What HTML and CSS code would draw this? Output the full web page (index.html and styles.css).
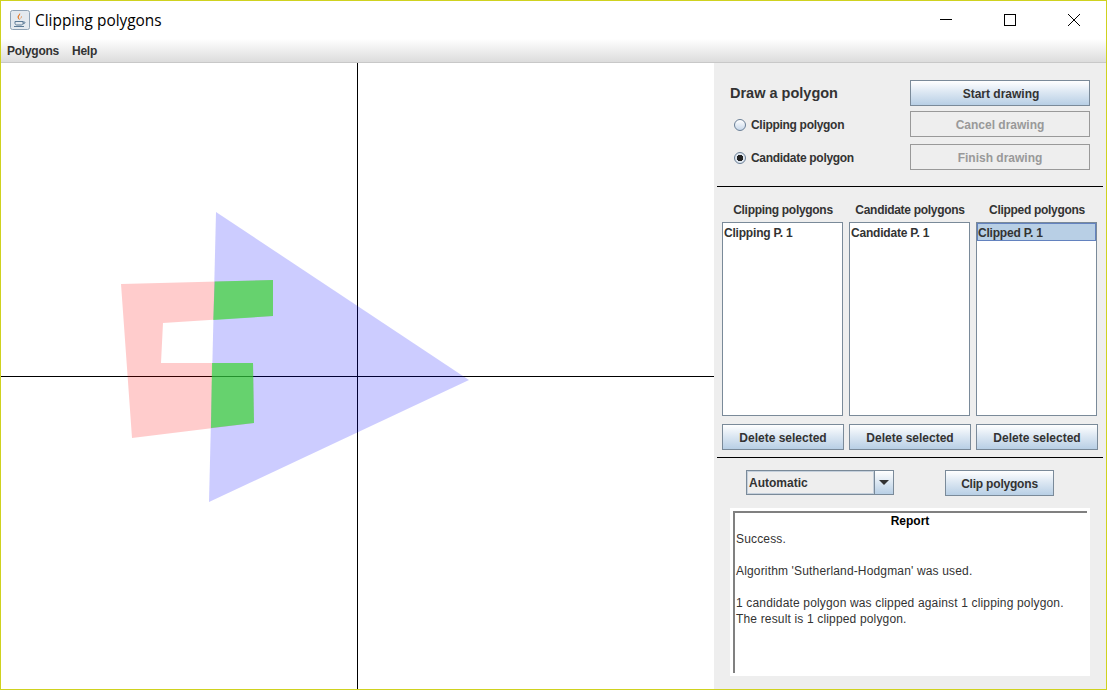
FILE: index.html
```html
<!DOCTYPE html>
<html lang="en">
<head>
    <meta charset="UTF-8">
    <title>Clipping polygons</title>
    <link rel="stylesheet" href="styles.css">
</head>
<body>
    <div class="window">
        <div class="titlebar">
            <svg class="app-icon" width="20" height="20" viewBox="0 0 20 20">
                <rect x="0.5" y="0.5" width="19" height="19" rx="2" fill="#e4e9ef" stroke="#8fa2b5"/>
                <path d="M10 3c1 2-2 3-1 5 .5 1 1 1.5 1 2-1-.5-2.500-1.500-2.500-3S9.500 4.500 10 3zM12 6c0 1.500-1.500 2-1 3.500-1-1 0-3 1-3.500z" fill="#e2792a"/>
                <path d="M5 11.500h8v2c0 1-1 1.500-2 1.500H7c-1 0-2-.5-2-1.500zM13 12h1.500c.8 0 .8 1.800-1.500 1.800" fill="none" stroke="#5b7a96"/>
                <path d="M4 16.500h10" stroke="#5b7a96"/>
            </svg>
            <span class="title">Clipping polygons</span>
            <div class="win-buttons">
                <svg width="12" height="12" viewBox="0 0 12 12"><path d="M0 5.500h12" stroke="#000"/></svg>
                <svg width="12" height="12" viewBox="0 0 12 12"><rect x="0.500" y="0.500" width="11" height="11" fill="none" stroke="#000"/></svg>
                <svg width="12" height="12" viewBox="0 0 12 12"><path d="M0 0l12 12M12 0L0 12" stroke="#000"/></svg>
            </div>
        </div>
        <div class="menubar">
            <span>Polygons</span>
            <span>Help</span>
        </div>
        <div class="main">
            <div class="canvas">
                <svg class="drawing" width="713" height="626" viewBox="1 63 713 626">
                    <path d="M357.500 63V689M1 376.500H714" stroke="#000" fill="none"/>
                    <polygon class="clip-poly" points="121,284 273,280 273,316 163,323 161,363 253,363 254,423 132,438"/>
                    <polygon class="cand-poly" points="216,212 469,380 209,502"/>
                    <polygon class="result-poly" points="214.700,281.500 273,280 273,316 213.300,320"/>
                    <polygon class="result-poly" points="212,363 253,363 254,423 211,428"/>
                </svg>
            </div>
            <div class="side">
                <div class="draw-section">
                    <div class="draw-labels">
                        <h2>Draw a polygon</h2>
                        <label class="radio"><span class="radio-dot"></span>Clipping polygon</label>
                        <label class="radio"><span class="radio-dot checked"></span>Candidate polygon</label>
                    </div>
                    <div class="draw-buttons">
                        <button class="btn start">Start drawing</button>
                        <button class="btn off">Cancel drawing</button>
                        <button class="btn off">Finish drawing</button>
                    </div>
                </div>
                <div class="divider"></div>
                <div class="lists">
                    <div class="list-col">
                        <div class="list-title">Clipping polygons</div>
                        <div class="listbox"><div class="item">Clipping P. 1</div></div>
                        <button class="btn">Delete selected</button>
                    </div>
                    <div class="list-col">
                        <div class="list-title">Candidate polygons</div>
                        <div class="listbox"><div class="item">Candidate P. 1</div></div>
                        <button class="btn">Delete selected</button>
                    </div>
                    <div class="list-col">
                        <div class="list-title">Clipped polygons</div>
                        <div class="listbox"><div class="item selected">Clipped P. 1</div></div>
                        <button class="btn">Delete selected</button>
                    </div>
                </div>
                <div class="divider"></div>
                <div class="clip-row">
                    <div class="combo">
                        <div class="combo-value">Automatic</div>
                        <div class="combo-arrow"><span></span></div>
                    </div>
                    <button class="btn clip-btn">Clip polygons</button>
                </div>
                <div class="report">
                    <div class="report-inner">
                        <div class="report-title">Report</div>
                        <p>Success.</p>
                        <p>&nbsp;</p>
                        <p>Algorithm 'Sutherland-Hodgman' was used.</p>
                        <p>&nbsp;</p>
                        <p>1 candidate polygon was clipped against 1 clipping polygon.</p>
                        <p>The result is 1 clipped polygon.</p>
                    </div>
                </div>
            </div>
        </div>
    </div>
</body>
</html>
```

FILE: styles.css
```css
* {
    box-sizing: border-box;
}

body {
    margin: 0;
    font-family: "Liberation Sans", Arial, sans-serif;
    font-size: 12px;
    color: #333;
    background-color: #fff;
}

.window {
    width: 1107px;
    height: 690px;
    border: 1px solid #cfd21f;
    display: flex;
    flex-direction: column;
    overflow: hidden;
}

.titlebar {
    height: 38px;
    flex: none;
    display: flex;
    align-items: center;
    padding-left: 9px;
    background-color: #fff;
}

.app-icon {
    flex: none;
}

.title {
    margin-left: 5px;
    font-family: "Open Sans", sans-serif;
    font-size: 15.4px;
    color: #000;
}

.win-buttons {
    margin-left: auto;
    margin-right: 26px;
    display: flex;
    gap: 52px;
}

.menubar {
    height: 24px;
    flex: none;
    display: flex;
    gap: 13px;
    align-items: center;
    padding: 0 6px;
    font-weight: bold;
    letter-spacing: -0.25px;
    background: linear-gradient(to bottom, #fff, #dcdcdc);
    border-bottom: 1px solid #c8c8c8;
}

.main {
    flex: 1;
    display: flex;
    min-height: 0;
}

.canvas {
    width: 713px;
    flex: none;
    background-color: #fff;
}

.drawing {
    display: block;
}

.clip-poly {
    fill: rgba(255, 0, 0, 0.2);
}

.cand-poly {
    fill: rgba(0, 0, 255, 0.2);
}

.result-poly {
    fill: rgba(34, 241, 40, 0.6);
}

.side {
    flex: 1;
    background-color: #eee;
    display: flex;
    flex-direction: column;
    padding-top: 17px;
    font-weight: bold;
}

.draw-section {
    display: flex;
    justify-content: space-between;
    height: 106px;
    padding: 0 16px;
}

.draw-labels h2 {
    margin: 4px 0 0;
    font-size: 14.5px;
    line-height: 18px;
}

.radio {
    display: flex;
    align-items: center;
    height: 16px;
    margin: 15px 0 0 4px;
    letter-spacing: -0.3px;
}

.radio + .radio {
    margin-top: 17px;
}

.radio-dot {
    width: 12px;
    height: 12px;
    margin-right: 5px;
    border: 1px solid #6a7f96;
    border-radius: 50%;
    background: linear-gradient(to bottom, #fff, #c8d8ea);
}

.radio-dot.checked {
    background: radial-gradient(circle, #222 0 3px, #dfe7f0 3.500px);
}

.draw-buttons {
    display: flex;
    flex-direction: column;
    width: 180px;
}

.btn {
    height: 26px;
    padding: 1px 0 0;
    font-family: inherit;
    font-size: 12px;
    font-weight: bold;
    color: #333;
    border: 1px solid #7a8a99;
    background: linear-gradient(to bottom, #fff, #dde8f3 45%, #b8cfe5);
}

.draw-buttons .btn {
    padding-top: 2px;
}

.draw-buttons .start {
    padding-left: 2px;
}

.draw-buttons .off {
    height: 26px;
    margin-top: 5px;
    color: #999;
    border-color: #999;
    background: #eee;
}

.draw-buttons .off + .off {
    margin-top: 7px;
}

.divider {
    height: 1px;
    flex: none;
    margin: 0 3px;
    background-color: #000;
}

.lists {
    display: flex;
    gap: 5px;
    height: 270px;
    padding: 16px 8px 0 8px;
}

.list-col {
    width: 122px;
    display: flex;
    flex-direction: column;
}

.list-title {
    height: 19px;
    line-height: 14px;
    text-align: center;
    letter-spacing: -0.3px;
}

.listbox {
    height: 194px;
    margin-right: 1px;
    background-color: #fff;
    border: 1px solid #7a8a99;
}

.item {
    height: 18px;
    line-height: 18px;
    border: 1px solid transparent;
    letter-spacing: -0.2px;
}

.item.selected {
    background-color: #b8cfe5;
    border-color: #6382bf;
}

.list-col .btn {
    margin-top: 8px;
}

.clip-row {
    display: flex;
    height: 50px;
    padding-top: 12px;
    padding-left: 32px;
}

.combo {
    width: 148px;
    height: 25px;
    display: flex;
    border: 1px solid #7a8a99;
}

.combo-value {
    flex: 1;
    line-height: 23px;
    padding-left: 1px;
    border: 1px solid #c5d0dc;
}

.combo-arrow {
    width: 19px;
    display: flex;
    align-items: center;
    justify-content: center;
    border-left: 1px solid #7a8a99;
    background: linear-gradient(to bottom, #fff, #b8cfe5);
}

.combo-arrow span {
    width: 0;
    height: 0;
    border-left: 5px solid transparent;
    border-right: 5px solid transparent;
    border-top: 5px solid #333;
}

.clip-btn {
    width: 109px;
    margin-left: 51px;
    padding-top: 2px;
    letter-spacing: -0.2px;
}

.report {
    width: 360px;
    height: 168px;
    margin-left: 16px;
    padding: 3px;
    background-color: #fff;
    font-weight: normal;
    letter-spacing: 0.16px;
}

.report-inner {
    height: 100%;
    padding: 1px 0 0 1px;
    border-top: 2px solid #808080;
    border-left: 2px solid #808080;
}

.report-title {
    padding-right: 3px;
    text-align: center;
    font-weight: bold;
    color: #000;
    line-height: 14px;
    margin-bottom: 3px;
    letter-spacing: 0;
}

.report p {
    margin: 0;
    line-height: 16px;
}
```
